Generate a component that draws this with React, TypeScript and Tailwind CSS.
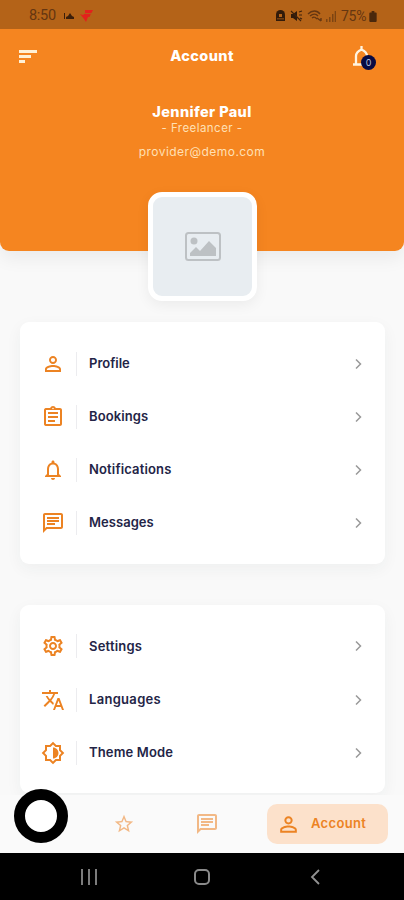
import React from "react";
import type { IconType } from "react-icons";
import {
  MdOutlinePersonOutline,
  MdOutlineAssignment,
  MdNotificationsNone,
  MdOutlineChat,
  MdOutlineSettings,
  MdTranslate,
  MdOutlineBrightness6,
  MdStarBorder,
} from "react-icons/md";

interface MenuItem {
  label: string;
  icon: IconType;
  tracking: string;
}

const ACCOUNT_ITEMS: MenuItem[] = [
  { label: "Profile", icon: MdOutlinePersonOutline, tracking: "tracking-[0px]" },
  { label: "Bookings", icon: MdOutlineAssignment, tracking: "tracking-[0.1px]" },
  { label: "Notifications", icon: MdNotificationsNone, tracking: "tracking-[0.15px]" },
  { label: "Messages", icon: MdOutlineChat, tracking: "tracking-[0.05px]" },
];

const APP_ITEMS: MenuItem[] = [
  { label: "Settings", icon: MdOutlineSettings, tracking: "tracking-[0.2px]" },
  { label: "Languages", icon: MdTranslate, tracking: "tracking-[0.3px]" },
  { label: "Theme Mode", icon: MdOutlineBrightness6, tracking: "tracking-[0.15px]" },
];

function StatusBar() {
  return (
    <div className="flex h-[29px] shrink-0 items-center bg-[#b46318] pl-[29px] pr-[27px] pt-[3px] text-[#653611]">
      <span className="w-[28px] font-[Roboto] text-[14.5px] leading-none tracking-[-0.3px]">8:50</span>
      {/* Picture notification */}
      <svg className="ml-[7px] h-2 w-[10px]" viewBox="0 0 10 8" fill="#3b1f0b">
        <path d="M0 1h1v6H0zM2 7V5l2-1 2-3 2 3 2 1v2z" />
      </svg>
      <svg className="ml-[6px] h-[14px] w-[14px]" viewBox="0 0 14 14" fill="#e3211c">
        <path d="M5 1h8l-1.500 3H5zM0 5l3 1 2-1.500h6L9.500 8H8l-2 5-2-3z" />
        <path d="M5 4h6.500v.7H5z" fill="#b46318" />
      </svg>
      <div className="ml-auto flex items-center">
        <svg className="h-3 w-[9px]" viewBox="0 0 9 12" fill="#321b0a">
          <path d="M0 11V4.500a4.500 4.500 0 0 1 9 0V11z" />
          <path d="M3 4h3v3H3zM1 8.500h7v.8H1z" fill="#b46318" />
        </svg>
        <svg className="ml-[5px] h-3 w-[13px]" viewBox="0 0 13 12" fill="#321b0a">
          <path d="M1 4h2l4-3v10L3 8H1z" />
          <path d="m1 1 10 10M9 2l3-1M9 5h3M10 8l2 1" stroke="#3f220c" strokeWidth="1.2" />
        </svg>
        <svg className="ml-[4px] h-3 w-[15px]" viewBox="0 0 15 12" fill="none" stroke="#653611" strokeWidth="1.4">
          <path d="M1 4c4-4 9-4 12 0M3 6c3-2.500 6-2.500 8 0M5 8c2-1.500 3-1 5 1M10 8l4 3M14 8v3" />
        </svg>
        <svg className="ml-[4px] h-[11px] w-[10px]" viewBox="0 0 10 11" fill="#7c4412">
          <path d="M0 8h1.500v3H0zM3 6h1.500v5H3zM6 3h1.500v8H6zM8.700 0H10v11H8.700z" />
        </svg>
        <span className="ml-[5px] w-[28px] font-[Roboto] text-[14px] leading-none tracking-[-0.3px]">75%</span>
        <svg className="h-[11px] w-[8px]" viewBox="0 0 8 12" fill="#4a280c">
          <path d="M2.500 0h3v1.500H7a1 1 0 0 1 1 1V11a1 1 0 0 1-1 1H1a1 1 0 0 1-1-1V2.500a1 1 0 0 1 1-1h1.500z" />
        </svg>
      </div>
    </div>
  );
}

function Header() {
  return (
    <header className="h-[222px] shrink-0 rounded-b-[9px] bg-[#f58520] text-center shadow-[0_8px_18px_rgba(0,0,0,0.06)]">
      <div className="flex h-[54px] items-center justify-between pl-[19px] pr-[27px]">
        <svg className="h-[13px] w-[18px]" viewBox="0 0 18 13" fill="#fff0d5">
          <path d="M0 0h18v3H0zM0 5h12v3H0zM0 10h6v3H0z" />
        </svg>
        <h1 className="ml-[14px] text-[14.5px] font-extrabold tracking-[0.4px] text-white">Account</h1>
        <div className="relative h-6 w-6">
          <svg className="h-6 w-6" viewBox="0 0 24 24" fill="none" stroke="#fff4e0" strokeWidth="2.300">
            <path d="M0 20.500h17M3 20.500v-8.500q0-4 5.500-6.500 5.500 2.500 5.500 6.500v8.500M8.500 2v4" />
          </svg>
          <span className="absolute left-[8px] top-[11px] flex h-[15px] w-[15px] items-center justify-center rounded-full bg-[#080b43] text-[9px] text-[#b9c0da]">
            0
          </span>
        </div>
      </div>
      <p className="mt-[19px] text-[14.5px] font-extrabold leading-[20px] tracking-[0.38px] text-white">Jennifer Paul</p>
      <p className="text-[11.5px] leading-[13px] tracking-[0.45px] text-[#ffe0b5]">- Freelancer -</p>
      <p className="mt-[9px] text-[12px] leading-[15px] tracking-[0.45px] text-[#ffe0b5]">provider@demo.com</p>
    </header>
  );
}

function Avatar() {
  return (
    <div className="relative -mt-[59px] ml-[148px] flex h-[109px] w-[109px] shrink-0 items-center justify-center rounded-[14px] border-[5px] border-white bg-[#e8edf1] shadow-[0_4px_14px_rgba(0,0,0,0.06)]">
      <svg className="h-[29px] w-[36px]" viewBox="0 0 36 29" fill="#bdc1c4">
        <rect x="1" y="1" width="34" height="27" rx="2.500" fill="none" stroke="#bdc1c4" strokeWidth="2" />
        <circle cx="9" cy="9" r="3.500" />
        <path d="M5 24v-3l6-6 4 4 9-10 7 7v8z" />
      </svg>
    </div>
  );
}

function MenuCard({ items }: { items: MenuItem[] }) {
  return (
    <section className="ml-5 mr-[19px] shrink-0 rounded-[9px] bg-white pb-[14px] pt-[15px] shadow-[0_5px_16px_rgba(30,60,60,0.05)]">
      {items.map(({ label, icon: Icon, tracking }) => (
        <div key={label} className="flex h-[53.2px] items-center pl-[20.5px] pr-[19px]">
          <Icon className="h-[24px] w-[24px] text-[#ec8323]" />
          <span className="ml-[11.5px] h-6 w-px bg-[#ececef]" />
          <span className={`ml-3 text-[13px] font-semibold text-[#232446] ${tracking}`}>{label}</span>
          <svg className="ml-auto h-4 w-4" viewBox="0 0 16 16" fill="none" stroke="#999" strokeWidth="1.500">
            <path d="m6 3.500 4.500 4.500L6 12.500" />
          </svg>
        </div>
      ))}
    </section>
  );
}

function BottomNav() {
  return (
    <nav className="flex h-[58px] shrink-0 items-center bg-[#fafafa] pl-[14px] pr-4">
      {/* Touch indicator ring sits above the tab bar edge */}
      <span className="relative -top-[8px] h-[54px] w-[54px] rounded-full border-[11px] border-black bg-white" />
      <MdStarBorder className="ml-[45px] h-[22px] w-[22px] text-[#f2b885]" />
      <MdOutlineChat className="ml-[60px] h-6 w-6 text-[#f2b885]" />
      <div className="ml-auto flex h-10 w-[121px] items-center rounded-[10px] bg-[#fce1cb] pl-[9px]">
        <MdOutlinePersonOutline className="h-[25px] w-[25px] text-[#ec8323]" />
        <span className="ml-[10px] text-[13px] font-semibold tracking-[0.35px] text-[#ec8323]">Account</span>
      </div>
    </nav>
  );
}

function SystemNav() {
  return (
    <div className="flex h-[47px] shrink-0 items-center bg-black pl-[81px]">
      <svg className="h-4 w-4" viewBox="0 0 16 16" fill="none" stroke="#929292" strokeWidth="1.700">
        <path d="M1 0v16M8 0v16M15 0v16" />
      </svg>
      <span className="ml-[97px] h-4 w-4 rounded-[5px] border-2 border-[#8a8a8a]" />
      <svg className="ml-[100px] h-4 w-[10px]" viewBox="0 0 10 16" fill="none" stroke="#929292" strokeWidth="1.800">
        <path d="M9 1 2 8l7 7" />
      </svg>
    </div>
  );
}

export default function App() {
  return (
    <div className="flex h-[900px] w-[404px] flex-col overflow-hidden bg-[#f9f9f9] font-['Inter','Open_Sans',sans-serif]">
      <StatusBar />
      <main className="flex min-h-0 flex-1 flex-col overflow-hidden">
        <Header />
        <Avatar />
        <div className="mt-[21px] flex flex-col gap-[41px]">
          <MenuCard items={ACCOUNT_ITEMS} />
          <MenuCard items={APP_ITEMS} />
        </div>
      </main>
      <BottomNav />
      <SystemNav />
    </div>
  );
}
